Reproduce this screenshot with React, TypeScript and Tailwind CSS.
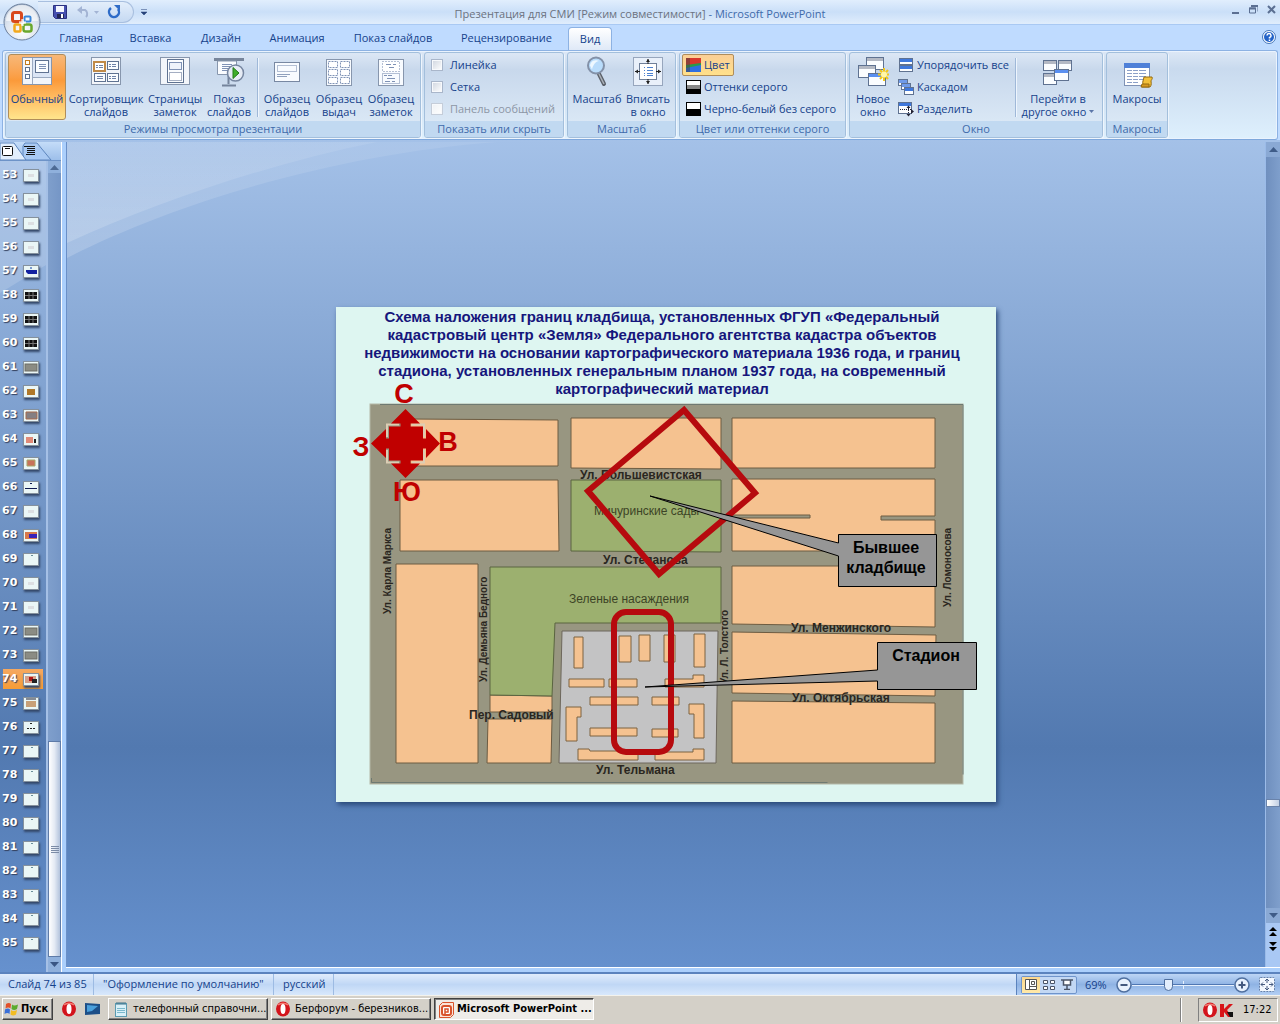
import React from "react";

/* ---------- generic icon frame ---------- */

type IconProps = { children: React.ReactNode; w?: number; h?: number };

function Svg({ children, w = 32, h = 32 }: IconProps) {
  return (
    <svg width={w} height={h} viewBox={`0 0 ${w} ${h}`} className="shrink-0" aria-hidden="true">
      {children}
    </svg>
  );
}

function Page({ x, y, w, h, bar, dash }: { x: number; y: number; w: number; h: number; bar?: string; dash?: boolean }) {
  return (
    <g>
      <rect x={x + 0.5} y={y + 0.5} width={w - 1} height={h - 1} fill="#fbfdff" stroke="#5f7291" strokeDasharray={dash ? "1 1" : undefined} />
      {bar && <rect x={x + 1} y={y + 1} width={w - 2} height={3} fill={bar} />}
    </g>
  );
}

function Lines({ x, y, w, n, gap = 2, color = "#7f92b5" }: { x: number; y: number; w: number; n: number; gap?: number; color?: string }) {
  return (
    <g stroke={color}>
      {Array.from({ length: n }, (_, i) => (
        <path key={i} d={`M${x} ${y + i * gap + 0.5}h${w}`} />
      ))}
    </g>
  );
}

function Sheet() {
  return <rect x="1.5" y="1.5" width="29" height="27" fill="#f2f5fa" stroke="#8796ad" />;
}

const NormalIcon = () => (
  <Svg>
    <Sheet />
    <rect x="11" y="2" width="19" height="19" fill="#dbe5f5" />
    <path d="M11.5 2v26M11 21.5h19" stroke="#9aa9c0" fill="none" />
    <Page x={14} y={4} w={14} h={13} />
    <Lines x={18} y={8} w={7} n={3} />
    <rect x="4.5" y="4.5" width="4" height="4" fill="#fff" stroke="#c07a1e" />
    <rect x="4.5" y="11.5" width="4" height="4" fill="#fff" stroke="#5f7291" />
    <rect x="4.5" y="18.5" width="4" height="4" fill="#fff" stroke="#5f7291" />
  </Svg>
);

const SorterIcon = () => (
  <Svg>
    <Sheet />
    <rect x="4" y="6" width="11" height="9" fill="#fff" stroke="#c08a48" strokeWidth="2" />
    <Page x={17} y={5} w={12} h={9} />
    <Page x={4} y={17} w={12} h={9} />
    <Page x={17} y={17} w={12} h={9} />
    <path d="M6 9.5h2m1 0h4M6 11.5h2m1 0h4M19 8.5h2m1 0h4M19 10.5h2m1 0h4M7 20.5h6M7 22.5h6M19 20.5h2m1 0h4M19 22.5h2m1 0h4" stroke="#6f83a8" />
  </Svg>
);

const NotesPageIcon = () => (
  <Svg>
    <Sheet />
    <Page x={8} y={3} w={17} h={24} />
    <rect x="10.500" y="6.500" width="12" height="7" fill="#eef3fb" stroke="#7f92b5" />
    <rect x="10.500" y="16.500" width="12" height="8" fill="#fff" stroke="#4a5f85" strokeDasharray="1 1" />
  </Svg>
);

const ShowIcon = () => (
  <Svg>
    <rect x="1" y="2" width="30" height="3" fill="#77859b" />
    <path d="M4.500 5v13.500h19V5z" fill="#fafcff" stroke="#8796ad" />
    <Lines x={9} y={8} w={10} n={4} />
    <path d="M15.500 19v9M9 29.500h14" stroke="#75849c" strokeWidth="2" />
    <circle cx="22.500" cy="17" r="8" fill="#e6ecf5" stroke="#7686a0" strokeWidth="1.500" />
    <path d="M20 11.500v11l6-5.500z" fill="#3fae2a" stroke="#237a18" />
  </Svg>
);

const MasterIcon = ({ kind }: { kind: "slide" | "handout" | "notes" }) => (
  <Svg>
    {kind === "slide" ? (
      <>
        <rect x="3.500" y="6.500" width="25" height="19" fill="#f8fbff" stroke="#7888a2" />
        <rect x="6.500" y="9.500" width="19" height="6" fill="none" stroke="#6f83a8" strokeDasharray="1 1" />
        <path d="M6 18.500h13M6 20.500h10" stroke="#8fa0bd" />
      </>
    ) : (
      <>
        <rect x="3.500" y="3.500" width="25" height="26" fill="#f8fbff" stroke="#8796ad" />
        {kind === "handout" ? (
          [5, 13, 21].map((y) => (
            <g key={y} fill="#fff" stroke="#7f92b5" strokeDasharray="2 1">
              <rect x="5.500" y={y + 0.5} width="9" height="6" />
              <rect x="17.500" y={y + 0.5} width="9" height="6" />
            </g>
          ))
        ) : (
          <>
            <rect x="7.500" y="5.500" width="17" height="10" fill="#fff" stroke="#6f83a8" strokeDasharray="1 2" />
            <path d="M11 8.500h5m2 0h3M14 11.500h5M9 19.500h3m1 0h4M12 22.500h8M10 25.500h5m2 0h3" stroke="#7f92b5" />
            <rect x="7.500" y="17.500" width="17" height="10" fill="none" stroke="#6f83a8" strokeDasharray="1 1" />
          </>
        )}
      </>
    )}
  </Svg>
);

const MagnifierIcon = () => (
  <Svg>
    <path d="M18 18l5 10" stroke="#5a5f68" strokeWidth="4" strokeLinecap="round" />
    <path d="M18 18l5 10" stroke="#aab0b8" strokeWidth="1.500" />
    <circle cx="15" cy="9.500" r="8" fill="#b9dcfb" stroke="#8391a8" strokeWidth="2" />
    <path d="M9 9.500a6 6 0 0 1 9-4.500C15 5.500 12 8.500 11 13.500z" fill="#eef8ff" />
  </Svg>
);

const FitIcon = () => (
  <Svg>
    <rect x="1.500" y="1.500" width="29" height="28" fill="#e9f0fa" stroke="#97a6bd" />
    <rect x="7.500" y="7.500" width="17" height="16" fill="#fff" stroke="#6f7f99" />
    <path d="M12 11.500h1m2 0h6M12 14.500h1m2 0h6M12 17.500h1m2 0h6M12 19.500h1m2 0h6" stroke="#4d82d0" />
    <path d="M16 3v5M16 23v5M3 15.500h5M24 15.500h5" stroke="#222" />
    <path d="M14 6l2-3 2 3zM14 25l2 3 2-3zM6 13.500l-3 2 3 2zM26 13.500l3 2-3 2z" fill="#222" />
  </Svg>
);

function Win({ x, y, w, h, active }: { x: number; y: number; w: number; h: number; active?: boolean }) {
  return <Page x={x} y={y} w={w} h={h} bar={active ? "#5a8ff0" : "#b4b9c4"} />;
}

const NewWindowIcon = () => (
  <Svg>
    <Win x={9} y={1} w={18} h={13} />
    <Win x={1} y={9} w={18} h={13} />
    <Win x={11} y={17} w={18} h={13} active />
    <path d="M27 12v13M21 18.500h11M23 14l8 9M31 14l-8 9" stroke="#f3c818" strokeWidth="2" />
    <circle cx="27" cy="18.500" r="3" fill="#fff6a8" />
  </Svg>
);

const SwitchIcon = () => (
  <Svg>
    <Win x={1} y={4} w={14} h={11} />
    <Win x={16} y={4} w={14} h={11} />
    <Win x={1} y={17} w={14} h={12} />
    <Win x={12} y={13} w={15} h={12} active />
  </Svg>
);

const MacroIcon = () => (
  <Svg>
    <rect x="3.500" y="7.500" width="25" height="22" fill="#fff" stroke="#7f92b5" />
    <rect x="3" y="7" width="26" height="5" fill="#4f80d8" />
    <path d="M6 14.500h5m1 0h5m1 0h7M6 17.500h5m1 0h5m1 0h7M6 20.500h5m1 0h5m1 0h7M6 23.500h5m1 0h5m1 0h7M6 26.500h5m1 0h5" stroke="#8ba0c8" />
    <path d="M23 21h8c1 2-1 3-1 4s1 4-1 6h-8c2-3 0-4 1-6z" fill="#f2c03a" stroke="#946a10" />
    <path d="M21 28h7v3h-8z" fill="#d89a20" stroke="#946a10" />
  </Svg>
);

const ArrangeIcon = () => (
  <Svg w={16} h={16}>
    <Page x={1} y={1} w={14} h={7} bar="#3f78dc" />
    <Page x={1} y={8} w={14} h={7} bar="#3f78dc" />
  </Svg>
);
const CascadeIcon = () => (
  <Svg w={16} h={16}>
    <Page x={0} y={0} w={10} h={7} bar="#6f9bea" />
    <Page x={3} y={4} w={10} h={7} bar="#6f9bea" />
    <Page x={6} y={8} w={10} h={8} bar="#3f78dc" />
  </Svg>
);
const SplitIcon = () => (
  <Svg w={16} h={16}>
    <Page x={0} y={1} w={14} h={12} bar="#3f78dc" />
    <path d="M2 8.500h12M10.500 5v10" stroke="#223" strokeDasharray="1 1" />
    <path d="M8.500 7l2-2.500 2 2.500zM8.500 13l2 2.500 2-2.500zM13 8l3 2.500-3 2.500z" fill="#223" />
  </Svg>
);

const ColorIcon = () => (
  <Svg w={15} h={14}>
    <rect width="15" height="14" fill="#2a9a4a" />
    <path d="M0 0h15v5L0 7z" fill="#d8382c" />
    <path d="M0 10l15-3v7H0z" fill="#2f6fe0" />
    <path d="M0 0h4v14H0z" fill="#444" opacity="0.500" />
  </Svg>
);
const GrayIcon = () => (
  <Svg w={15} h={14}>
    <rect width="15" height="14" fill="#000" />
    <rect x="1" y="1" width="13" height="4" fill="#fff" />
    <rect x="1" y="5" width="13" height="4" fill="#888" />
  </Svg>
);
const BwIcon = () => (
  <Svg w={15} h={14}>
    <rect width="15" height="14" fill="#000" />
    <rect x="1" y="1" width="13" height="6" fill="#fff" />
  </Svg>
);

const OperaIcon = () => (
  <Svg w={16} h={16}>
    <ellipse cx="8" cy="8" rx="7" ry="7.500" fill="#d3141c" />
    <path d="M3 4a7 6 0 0 1 10 0" stroke="#f47a70" fill="none" strokeWidth="1.500" />
    <ellipse cx="8" cy="8" rx="2.500" ry="5" fill="#fff" />
  </Svg>
);

/* ---------- title bar ---------- */

function OfficeButton() {
  return (
    <button aria-label="Office" className="absolute left-[3px] top-[3px] z-20 h-[38px] w-[38px]">
      <svg width="38" height="38" viewBox="0 0 38 38">
        <defs>
          <radialGradient id="orb" cx="50%" cy="75%" r="75%">
            <stop offset="0" stopColor="#ffffff" />
            <stop offset="0.600" stopColor="#dbe3ee" />
            <stop offset="1" stopColor="#b2bfd2" />
          </radialGradient>
        </defs>
        <circle cx="19" cy="19" r="18" fill="url(#orb)" stroke="#6b7f9c" />
        <path d="M3 18a16 16 0 0 1 32 0z" fill="#fff" opacity="0.600" />
        <g fill="none">
          <rect x="9.500" y="9.500" width="9" height="9" rx="2" stroke="#d8481c" strokeWidth="3" />
          <rect x="21.500" y="13.500" width="6" height="5" rx="1" stroke="#3a86d8" strokeWidth="2" />
          <rect x="11.500" y="21.500" width="6" height="7" rx="1" stroke="#f2a81c" strokeWidth="2.500" />
          <rect x="20.500" y="21.500" width="8" height="7" rx="2" stroke="#6aa82c" strokeWidth="2.500" />
        </g>
        <path d="M16 19h3v-3M20 16v3h3M16 20h3v3M20 23v-3h3" stroke="#fff" fill="none" />
      </svg>
    </button>
  );
}

function TitleBar() {
  return (
    <header className="relative flex h-6 items-center bg-linear-to-b from-[#e1eefd] via-[#cadff8] to-[#e0edfc]">
      <OfficeButton />
      <div className="ml-[38px] flex h-[22px] w-24 items-center gap-2 rounded-r-full border border-l-0 border-[#a8bfdf] bg-linear-to-b from-[#e3eefb] to-[#c5d9f2] pl-[14px]">
        <button aria-label="Сохранить">
          <Svg w={16} h={16}>
            <path d="M1.500 1.500h13v13h-11l-2-2z" fill="#4650b0" stroke="#2b3180" />
            <rect x="4" y="2" width="8" height="6" fill="#f4f6ff" />
            <rect x="5" y="10" width="7" height="4" fill="#222653" />
            <rect x="9" y="10" width="2" height="4" fill="#fff" />
          </Svg>
        </button>
        <button aria-label="Отменить" className="flex items-center gap-1">
          <Svg w={14} h={16}>
            <path d="M3 6h6a3 4 0 0 1 1 7" stroke="#a3b4d4" strokeWidth="2" fill="none" />
            <path d="M1 6l5-4v8z" fill="#a3b4d4" />
          </Svg>
          <Svg w={5} h={3}>
            <path d="M0 0h5l-2.500 3z" fill="#a3b4d4" />
          </Svg>
        </button>
        <button aria-label="Повторить">
          <Svg w={14} h={16}>
            <path d="M4 4a5 5 0 1 0 7 1" stroke="#2f6cc8" strokeWidth="2.500" fill="none" />
            <path d="M7 1h6v6z" fill="#2f6cc8" />
          </Svg>
        </button>
      </div>
      <button aria-label="Настройка панели" className="ml-[7px]">
        <Svg w={6} h={8}>
          <path d="M0 1.500h6M0 4h6l-3 3z" fill="#26427a" stroke="#26427a" strokeWidth="0.500" />
        </Svg>
      </button>
      <h1 className="absolute inset-x-0 top-[5px] text-center text-[11px] leading-[18px] text-[#3e6aaa]">
        <span className="text-[#6b7280]">Презентация для СМИ [Режим совместимости]</span>
        {"  - Microsoft PowerPoint"}
      </h1>
      <div className="z-10 mb-[6px] ml-auto flex items-center gap-[9px] pr-1">
        <button aria-label="Свернуть">
          <Svg w={9} h={9}>
            <path d="M1 8h7" stroke="#5b6f92" strokeWidth="2" />
          </Svg>
        </button>
        <button aria-label="Восстановить">
          <Svg w={9} h={9}>
            <path d="M2 1.500h7v5M0.500 3v5h6V3z" stroke="#5b6f92" fill="none" />
            <path d="M2 1h7M0 3.500h7" stroke="#5b6f92" strokeWidth="2" />
          </Svg>
        </button>
        <button aria-label="Закрыть">
          <Svg w={9} h={9}>
            <path d="M1 1l7 7M8 1L1 8" stroke="#5b6f92" strokeWidth="2" />
          </Svg>
        </button>
      </div>
    </header>
  );
}

function TabBar() {
  const tabs: [string, string][] = [
    ["Главная", "w-[70px]"],
    ["Вставка", "w-[69px]"],
    ["Дизайн", "w-[72px]"],
    ["Анимация", "w-[80px]"],
    ["Показ слайдов", "w-[112px]"],
    ["Рецензирование", "w-[115px]"],
  ];
  return (
    <nav className="flex h-[26px] items-end border-t border-[#a9c9f3] bg-[#bfdbff] pl-[46px] text-[11px] text-[#15428b]">
      {tabs.map(([t, w]) => (
        <button key={t} className={`${w} h-[23px] whitespace-nowrap`}>
          {t}
        </button>
      ))}
      <button className="ml-1 h-[23px] w-11 rounded-t border border-b-0 border-[#8db2e3] bg-linear-to-b from-white to-[#dfe9f7]">Вид</button>
      <button aria-label="Справка" className="mb-[6px] ml-auto mr-1">
        <Svg w={14} h={14}>
          <circle cx="7" cy="7" r="6.500" fill="#fff" stroke="#4576b8" />
          <circle cx="7" cy="7" r="5" fill="#2463c8" />
          <path d="M5 5.500a2 2 0 1 1 2.500 2v1M7.500 9.500v1.500" stroke="#fff" strokeWidth="1.500" fill="none" />
        </Svg>
      </button>
    </nav>
  );
}

/* ---------- ribbon ---------- */

function Group({ label, className, children }: { label: string; className: string; children: React.ReactNode }) {
  return (
    <section
      className={`flex h-[86px] flex-col rounded-[3px] border border-[#a3bfdc] bg-linear-to-b from-[#dce7f5] from-0% via-[#c8d8ec] via-20% to-[#dfecf8] shadow-[1px_1px_0_#eef5fd] ${className}`}
    >
      <div className="flex flex-1 px-[2px] pt-px">{children}</div>
      <h2 className="h-4 overflow-hidden whitespace-nowrap rounded-b-[2px] bg-[#c1d9f1] text-center text-[11px] leading-4 text-[#3e6aaa]">{label}</h2>
    </section>
  );
}

function BigButton({ icon, lines, className, active, menu }: { icon: React.ReactNode; lines: string[]; className: string; active?: boolean; menu?: boolean }) {
  return (
    <button
      className={`flex h-[66px] flex-col items-center whitespace-nowrap rounded-[3px] border pt-px leading-[13px] ${
        active ? "border-[#b08d5a] bg-linear-to-b from-[#f7b878] from-0% via-[#fb9a3a] via-40% to-[#ffe58c]" : "border-transparent"
      } ${className}`}
    >
      {icon}
      <span className="mt-1 block">{lines[0]}</span>
      {lines[1] && (
        <span className="flex items-center gap-[3px]">
          {lines[1]}
          {menu && (
            <Svg w={5} h={3}>
              <path d="M0 0h5l-2.500 3z" fill="#5b76a8" />
            </Svg>
          )}
        </span>
      )}
    </button>
  );
}

const Separator = ({ className }: { className: string }) => <div className={`my-1 w-px bg-[#9fb8d8] shadow-[1px_0_0_#eef5fd] ${className}`} />;

function SmallButton({ icon, label, active }: { icon: React.ReactNode; label: string; active?: boolean }) {
  return (
    <button
      className={`flex h-[22px] items-center gap-[3px] self-start whitespace-nowrap rounded-[2px] border px-[3px] ${
        active ? "border-[#b08d5a] bg-linear-to-b from-[#fbcf96] to-[#ffe08a]" : "border-transparent"
      }`}
    >
      {icon}
      {label}
    </button>
  );
}

function CheckRow({ label, disabled }: { label: string; disabled?: boolean }) {
  return (
    <label className={`flex h-[22px] items-center gap-[7px] whitespace-nowrap pl-1 ${disabled ? "text-[#8d96a5]" : ""}`}>
      <input
        type="checkbox"
        disabled={disabled}
        className="h-3 w-3 appearance-none border border-[#a9b6ca] bg-linear-to-br from-[#cfd5df] to-white shadow-[inset_0_0_0_1px_#f7f9fc] disabled:border-[#c5cdd9] disabled:from-[#eef1f5]"
      />
      {label}
    </label>
  );
}

function Ribbon() {
  return (
    <div className="mx-[2px] flex h-[90px] gap-[3px] rounded-[3px] border border-[#8db2e3] border-b-[#7fa8dc] bg-linear-to-b from-[#dde8f6] from-0% via-[#c9daee] via-20% to-[#def0fd] pl-[2px] pt-px text-[11px] text-[#15428b] shadow-[inset_0_0_0_1px_#eaf3fe]">
      <Group label="Режимы просмотра презентации" className="w-[416px]">
        <BigButton className="w-[58px]" icon={<NormalIcon />} lines={["Обычный"]} active />
        <BigButton className="w-[80px]" icon={<SorterIcon />} lines={["Сортировщик", "слайдов"]} />
        <BigButton className="w-[58px]" icon={<NotesPageIcon />} lines={["Страницы", "заметок"]} />
        <BigButton className="w-[50px]" icon={<ShowIcon />} lines={["Показ", "слайдов"]} />
        <Separator className="mx-[3px]" />
        <BigButton className="w-[52px]" icon={<MasterIcon kind="slide" />} lines={["Образец", "слайдов"]} />
        <BigButton className="w-[52px]" icon={<MasterIcon kind="handout" />} lines={["Образец", "выдач"]} />
        <BigButton className="w-[52px]" icon={<MasterIcon kind="notes" />} lines={["Образец", "заметок"]} />
      </Group>
      <Group label="Показать или скрыть" className="w-[140px]">
        <div className="flex flex-col">
          <CheckRow label="Линейка" />
          <CheckRow label="Сетка" />
          <CheckRow label="Панель сообщений" disabled />
        </div>
      </Group>
      <Group label="Масштаб" className="w-[109px]">
        <BigButton className="w-[54px]" icon={<MagnifierIcon />} lines={["Масштаб"]} />
        <BigButton className="w-[48px]" icon={<FitIcon />} lines={["Вписать", "в окно"]} />
      </Group>
      <Group label="Цвет или оттенки серого" className="w-[167px]">
        <div className="flex flex-col">
          <SmallButton icon={<ColorIcon />} label="Цвет" active />
          <SmallButton icon={<GrayIcon />} label="Оттенки серого" />
          <SmallButton icon={<BwIcon />} label="Черно-белый без серого" />
        </div>
      </Group>
      <Group label="Окно" className="w-[254px]">
        <BigButton className="w-[42px]" icon={<NewWindowIcon />} lines={["Новое", "окно"]} />
        <div className="flex w-[119px] flex-col">
          <SmallButton icon={<ArrangeIcon />} label="Упорядочить все" />
          <SmallButton icon={<CascadeIcon />} label="Каскадом" />
          <SmallButton icon={<SplitIcon />} label="Разделить" />
        </div>
        <Separator className="mx-[2px]" />
        <BigButton className="w-[80px]" icon={<SwitchIcon />} lines={["Перейти в", "другое окно"]} menu />
      </Group>
      <Group label="Макросы" className="w-[62px]">
        <BigButton className="w-[56px]" icon={<MacroIcon />} lines={["Макросы"]} />
      </Group>
    </div>
  );
}

/* ---------- thumbnails ---------- */

function thumbArt(n: number): React.ReactNode {
  if (n >= 77 || n === 69) return <rect x="7" y="1" width="2" height="1" fill="#6a8f9a" />;
  if (n === 76) return <path d="M3 6.500h2m1 0h2m1 0h2M6 1.500h2" stroke="#222" />;
  if (n === 57)
    return (
      <g fill="#1222a0">
        <rect x="6" y="1" width="2" height="2" fill="#7a9ad0" />
        <path d="M2 4h11v4H4L2 6z" />
      </g>
    );
  if (n === 66) return <path d="M6 1.500h2M1 6.500h12" stroke="#0d1a50" />;
  if (n >= 58 && n <= 60)
    return (
      <g>
        <rect x="1" y="2" width="12" height="7" fill="#111" />
        <path d="M5 2v7M9 2v7M1 5.500h12" stroke="#777" />
      </g>
    );
  if (n === 61 || n === 72 || n === 73) return <rect x="1" y="2" width="12" height="7" fill="#8b8c84" stroke="#6c6d64" />;
  if (n === 62) return <rect x="3" y="3" width="8" height="6" fill="#b07828" />;
  if (n === 63) return <path d="M2 2h11v7H2z" fill="#857f82" stroke="#a86a4a" />;
  if (n === 64)
    return (
      <g>
        <path d="M2 3h7v6H2z" fill="#e08a78" />
        <path d="M10 5h2v4h-2z" fill="#222" />
      </g>
    );
  if (n === 65) return <path d="M3 2h8v6H3z" fill="#c8725a" stroke="#a8a868" />;
  if (n === 68)
    return (
      <g>
        <path d="M1 2h12v7H1z" fill="#d8784a" />
        <path d="M5 4h8v4H5z" fill="#3a22b8" />
      </g>
    );
  if (n === 74)
    return (
      <g>
        <path d="M1 2h11v7H1z" fill="#d8a088" />
        <path d="M5 3h4v4H5z" fill="#b01818" />
        <path d="M8 5h5v4H8z" fill="#222" />
      </g>
    );
  if (n === 75)
    return (
      <g>
        <path d="M2 1h10" stroke="#223" />
        <path d="M2 3h10v6H2z" fill="#c8a078" />
      </g>
    );
  return <path d="M4 4h6v3H4z" fill="#dcdfe2" />;
}

function ThumbPanel() {
  const numbers = Array.from({ length: 33 }, (_, i) => 53 + i);
  return (
    <aside className="relative flex w-[62px] shrink-0 flex-col border-r border-white">
      <svg className="absolute left-0 top-[19px]" width="46" height="132" viewBox="0 0 46 132" aria-hidden="true">
        <path d="M0 0h46v104L0 132z" fill="#fff" opacity="0.150" />
      </svg>
      <div className="flex h-[19px] border-b border-[#6d93c8] bg-linear-to-b from-[#c4dcf8] to-[#9dbfea]">
        <svg width="61" height="18" viewBox="0 0 61 18" role="img" aria-label="Слайды и структура">
          <path d="M23 18V4l2-3h12l14 17z" fill="#a9c9f3" stroke="#5d85bd" />
          <path d="M0 18V1h14l12 17z" fill="#e2eefc" stroke="#5d85bd" />
          <rect x="2.500" y="4.500" width="10" height="9" rx="1" fill="#fff" stroke="#111" />
          <path d="M5 6.500h5M24 4.500h11M27 6.500h8M27 8.500h8M27 10.500h8M26 12.500h9" stroke="#111" />
        </svg>
      </div>
      <div className="relative flex flex-1">
        <ol className="w-[46px] pt-[2px] font-['DejaVu_Sans'] text-[11px] font-bold text-white">
          {numbers.map((n) => (
            <li key={n} className="flex h-6 items-center">
              <button className={`ml-[3px] flex h-5 w-10 items-center justify-between pr-1 [text-shadow:1px_1px_1px_#333f5c] ${n === 74 ? "bg-linear-to-b from-[#f5a860] to-[#f59c34]" : ""}`}>
                <span className="-ml-px">{n}</span>
                <svg width="16" height="13" viewBox="-1 -1 16 13" className="bg-[#eaf6f6] shadow-[1px_2px_2px_#34486a]">
                  {thumbArt(n)}
                  <rect x="-0.500" y="-0.500" width="15" height="12" fill="none" stroke="#5a6678" strokeOpacity="0.700" />
                </svg>
              </button>
            </li>
          ))}
        </ol>
        <div className="flex flex-1 flex-col items-center border-l-2 border-[#a5c0e6] bg-linear-to-r from-[#7f9fcc] to-[#7596c6]">
          <button aria-label="Вверх" className="flex h-3 w-full items-center justify-center bg-[#8fb0dc]">
            <Svg w={9} h={5}>
              <path d="M0 5h9L4.500 0z" fill="#4d6a94" />
            </Svg>
          </button>
          <div className="flex-1" />
          <div className="flex h-[216px] w-[13px] flex-col items-center justify-center gap-px border border-[#5e7ba8] bg-linear-to-r from-white via-[#e4eaf4] to-[#b3c3dc]">
            {[0, 1, 2, 3].map((i) => (
              <div key={i} className="h-px w-2 bg-[#7b8ba6]" />
            ))}
          </div>
          <button aria-label="Вниз" className="flex h-[15px] w-full items-center justify-center bg-[#8fb0dc]">
            <Svg w={9} h={5}>
              <path d="M0 0h9L4.500 5z" fill="#3a5684" />
            </Svg>
          </button>
        </div>
      </div>
    </aside>
  );
}

/* ---------- slide ---------- */

const blocks = [
  "410,419 558,420 558,466 410,466",
  "571,418 721,418 721,469 571,468",
  "732,418 935,418 935,468 732,468",
  "400,480 558,480 559,551 400,551",
  "732,479 935,479 935,516 881,516 881,520 935,520 935,551 732,551 732,518 810,518 810,515 732,515",
  "396,564 478,564 478,763 396,763",
  "490,695 552,696 552,712 490,712",
  "488,719 552,719 551,763 487,763",
  "732,566 935,566 935,627 732,624",
  "732,632 936,635 935,696 732,693",
  "732,701 935,703 935,763 732,763",
];

const buildings = [
  "574,637 583,637 583,668 574,668",
  "619,636 631,636 631,662 619,662",
  "639,635 650,635 650,661 639,661",
  "664,635 675,635 675,662 664,662",
  "694,634 705,634 705,667 694,667",
  "569,679 604,679 604,687 569,687",
  "609,679 637,679 637,687 609,687",
  "590,697 638,697 638,705 590,705",
  "652,697 679,697 679,705 652,705",
  "590,728 637,728 637,736 590,736",
  "652,729 678,729 678,737 652,737",
  "665,679 693,679 693,675 704,675 704,687 665,687",
  "566,707 581,707 581,717 577,717 577,741 566,741",
  "689,704 704,704 704,738 694,738 694,714 689,714",
  "578,749 589,749 590,751 638,751 638,760 578,760",
  "655,752 693,752 693,749 704,749 704,760 655,760",
];

function MapDrawing() {
  return (
    <svg viewBox="336 307 660 495" className="absolute inset-0 h-full w-full" fontFamily="'Liberation Sans', Arial, sans-serif" role="img" aria-label="Схема границ">
      <rect x="370" y="404" width="593" height="380" fill="#989681" stroke="#b4b8a8" />
      <path d="M380 404.500h583v370M371.500 778v4.500h456" fill="none" stroke="#6f7a72" />
      <g fill="#f5c290" stroke="#6d5c42">
        {blocks.map((p) => (
          <polygon key={p} points={p} />
        ))}
      </g>
      <g fill="#9cb06f" stroke="#5a6440">
        <polygon points="571,480 721,480 721,552 571,551" />
        <polygon points="490,567 721,567 721,623 555,623 552,696 490,695" />
      </g>
      <polygon points="562,631 718,631 716,763 559,763" fill="#c3c3c4" stroke="#6d675c" />
      <g fill="#f5c290" stroke="#7d6240">
        {buildings.map((p) => (
          <polygon key={p} points={p} />
        ))}
      </g>
      <g fontSize="12" fontWeight="700" fill="#2a2620">
        <text x="580" y="479">Ул. Большевистская</text>
        <text x="603" y="564">Ул. Степанова</text>
        <text x="791" y="632">Ул. Менжинского</text>
        <text x="792" y="702">Ул. Октябрьская</text>
        <text x="596" y="774">Ул. Тельмана</text>
        <text x="469" y="719">Пер. Садовый</text>
      </g>
      <g fontSize="12" fill="#3c4426">
        <text x="594" y="515">Мичуринские сады</text>
        <text x="569" y="603">Зеленые насаждения</text>
      </g>
      <g fontSize="10" fontWeight="700" fill="#2a2620">
        <text transform="translate(391 614) rotate(-90)">Ул. Карла Маркса</text>
        <text transform="translate(487 682) rotate(-90)">Ул. Демьяна Бедного</text>
        <text transform="translate(728 684) rotate(-90)">Ул. Л. Толстого</text>
        <text transform="translate(951 607) rotate(-90)">Ул. Ломоносова</text>
      </g>
      <g fill="none" stroke="#b60a0e" strokeWidth="6">
        <polygon points="684,410 588,491 659,574 755,493" />
        <rect x="614" y="612" width="57" height="140" rx="12" />
      </g>
      <g fill="none" stroke="#dccdb4" strokeWidth="2">
        <path d="M387 437v-12.500h12M412 424.500h12V437M387 450v12.500h12M412 462.500h12V450" />
      </g>
      <path
        d="M405.500 409l14.500 14.500h-9.500v3H423v12h3v-9.500l14 14.500-14 14.500v-9.500h-3v12h-12.500v3h9.500L405.500 478 391 463.500h9.500v-3H389v-12h-3v9.500l-15-14.500 15-14.500v9.500h3v-12h11.500v-3H391z"
        fill="#c00000"
      />
      <g fontSize="27" fontWeight="700" fill="#c00000" textAnchor="middle">
        <text x="404" y="403">С</text>
        <text x="361" y="456">З</text>
        <text x="448" y="451">В</text>
        <text x="407" y="501">Ю</text>
      </g>
      <g fill="#969696" stroke="#000">
        <path d="M838.500 534.500h98v52h-98V556L650 496l188.500 47z" />
        <path d="M877.500 642.500h99v47h-99V681L645 687l232.500-17z" />
      </g>
      <g fontSize="16" fontWeight="700" fill="#000" textAnchor="middle">
        <text x="886" y="553">Бывшее</text>
        <text x="886" y="573">кладбище</text>
        <text x="926" y="661">Стадион</text>
      </g>
    </svg>
  );
}

function Slide() {
  return (
    <article className="relative aspect-[4/3] w-[660px] bg-[#def6f1] pr-2 shadow-[2px_3px_5px_#2b4a7a]">
      <h2 className="pt-px text-center font-['Liberation_Sans'] text-[15px] font-bold leading-[18px] text-[#16167c]">
        <span className="block">Схема наложения границ кладбища, установленных ФГУП «Федеральный</span>
        <span className="block">кадастровый центр «Земля» Федерального агентства кадастра объектов</span>
        <span className="block">недвижимости на основании картографического материала 1936 года, и границ</span>
        <span className="block">стадиона, установленных генеральным планом 1937 года, на современный</span>
        <span className="block">картографический материал</span>
      </h2>
      <MapDrawing />
    </article>
  );
}

function Workspace() {
  return (
    <main className="flex min-w-0 flex-1 flex-col border-l-4 border-[#abcffc]">
      <div className="flex flex-1">
        <div className="relative flex flex-1 items-center justify-center overflow-hidden border-l border-[#6b90c8]">
          <svg className="absolute left-0 top-0" width="460" height="120" viewBox="0 0 460 120" aria-hidden="true">
            <defs>
              <linearGradient id="sheen" x1="0" y1="0" x2="0" y2="1">
                <stop offset="0" stopColor="#fff" stopOpacity="0.080" />
                <stop offset="1" stopColor="#fff" stopOpacity="0.180" />
              </linearGradient>
            </defs>
            <path d="M0 0h430C270 12 110 60 0 116z" fill="url(#sheen)" />
            <path d="M0 0h310C200 22 90 60 0 101z" fill="url(#sheen)" />
          </svg>
          <Slide />
        </div>
        <div className="flex w-[15px] flex-col border-l border-[#9bbbe8] bg-linear-to-r from-[#6f8fbe] to-[#7f9fcc]">
          <button aria-label="Прокрутить вверх" className="flex h-[15px] items-center justify-center bg-[#8aa9d4]">
            <Svg w={9} h={5}>
              <path d="M0 5h9L4.500 0z" fill="#3f5c88" />
            </Svg>
          </button>
          <div className="flex-1" />
          <div className="h-2 border border-[#6a83aa] bg-linear-to-r from-white to-[#c3d0e4]" />
          <div className="h-[101px]" />
          <button aria-label="Прокрутить вниз" className="flex h-[15px] items-center justify-center bg-[#8aa9d4]">
            <Svg w={9} h={5}>
              <path d="M0 0h9L4.500 5z" fill="#3f5c88" />
            </Svg>
          </button>
          <div className="flex h-11 flex-col items-center gap-[6px] bg-[#a9c8f4] pt-1">
            <button aria-label="Предыдущий слайд">
              <Svg w={8} h={9}>
                <path d="M0 4h8L4 0zM0 9h8L4 5z" fill="#000" />
              </Svg>
            </button>
            <button aria-label="Следующий слайд">
              <Svg w={8} h={9}>
                <path d="M0 0h8L4 4zM0 5h8L4 9z" fill="#000" />
              </Svg>
            </button>
          </div>
        </div>
      </div>
      <div className="h-[5px] border-t border-white bg-[#abcffc]" />
    </main>
  );
}

/* ---------- status bar ---------- */

function StatusBar() {
  return (
    <footer className="flex h-[23px] items-stretch border-t-2 border-[#5b83be] bg-linear-to-b from-[#e0ecfc] via-[#c0d7f5] to-[#d8e8fc] text-[11px] leading-5 text-[#15428b]">
      <span className="w-[94px] whitespace-nowrap border-r border-[#9dbbe3] pl-2">Слайд 74 из 85</span>
      <span className="w-[180px] whitespace-nowrap border-r border-[#9dbbe3] pl-[9px]">"Оформление по умолчанию"</span>
      <span className="w-[60px] border-r border-[#9dbbe3] pl-[9px]">русский</span>
      <div className="ml-auto flex w-[264px] items-center border-l border-[#5b83be] bg-linear-to-b from-[#bdd5f5] via-[#8fb3e4] to-[#b3cff4] pl-1">
        <div className="flex h-[18px] rounded-[2px] border border-[#6f94cb] bg-[#c3d8f4]">
          <button aria-label="Обычный режим" className="flex w-[18px] items-center justify-center bg-linear-to-b from-[#fbd78e] to-[#ffe9a8]">
            <Svg w={12} h={11}>
              <path d="M0.500 0.500h11v10H0.500zM4.500 0v11M6.500 2.500h3v3h-3zM4.500 7.500h7" fill="#fff" stroke="#555" />
            </Svg>
          </button>
          <button aria-label="Сортировщик" className="flex w-[18px] items-center justify-center">
            <Svg w={12} h={10}>
              <path d="M0.500 0.500h4v3h-4zM7.500 0.500h4v3h-4zM0.500 6.500h4v3h-4zM7.500 6.500h4v3h-4z" fill="#fff" stroke="#4b5568" />
            </Svg>
          </button>
          <button aria-label="Показ слайдов" className="flex w-[18px] items-center justify-center">
            <Svg w={12} h={11}>
              <path d="M0 1h12M2.500 1v5h7V1M6 6v4M3 10.500h6" fill="#fff" stroke="#4b5568" strokeWidth="1.500" />
            </Svg>
          </button>
        </div>
        <button className="ml-2 w-[30px] text-left">69%</button>
        <button aria-label="Уменьшить" className="ml-px">
          <Svg w={16} h={16}>
            <circle cx="8" cy="8" r="7" fill="#e8f1fd" stroke="#4f6f9f" strokeWidth="1.500" />
            <path d="M4.500 8h7" stroke="#44597e" strokeWidth="2" />
          </Svg>
        </button>
        <input
          type="range"
          min={0}
          max={100}
          defaultValue={34}
          aria-label="Масштаб"
          className="h-4 w-[102px] appearance-none bg-[linear-gradient(#4f77b3,#4f77b3),linear-gradient(#e6f0fd,#e6f0fd),linear-gradient(#e6f0fd,#e6f0fd)] bg-[length:100%_1px,100%_1px,1px_8px] bg-[position:0_7px,0_8px,51px_4px] bg-no-repeat [&::-webkit-slider-thumb]:h-3 [&::-webkit-slider-thumb]:w-[9px] [&::-webkit-slider-thumb]:appearance-none [&::-webkit-slider-thumb]:rounded-b-full [&::-webkit-slider-thumb]:border [&::-webkit-slider-thumb]:border-[#4f6f9f] [&::-webkit-slider-thumb]:bg-[#e3eefc]"
        />
        <button aria-label="Увеличить">
          <Svg w={16} h={16}>
            <circle cx="8" cy="8" r="7" fill="#e8f1fd" stroke="#4f6f9f" strokeWidth="1.500" />
            <path d="M4.500 8h7M8 4.500v7" stroke="#44597e" strokeWidth="2" />
          </Svg>
        </button>
        <button aria-label="Вписать слайд" className="ml-[9px]">
          <Svg w={16} h={15}>
            <rect x="0.500" y="0.500" width="15" height="14" rx="1" fill="#f2f7fe" stroke="#6580ab" strokeDasharray="2 1" />
            <path d="M8 2v4M8 9v4M2 7.500h4M10 7.500h4M6 4l2-2 2 2M6 11l2 2 2-2M4 5.500l-2 2 2 2M12 5.500l2 2-2 2" stroke="#44597e" fill="none" />
          </Svg>
        </button>
      </div>
    </footer>
  );
}

/* ---------- taskbar ---------- */

const raised = "border border-t-white border-l-white border-r-[#404040] border-b-[#404040] shadow-[inset_-1px_-1px_0_#808080]";

function Taskbar() {
  return (
    <div className="flex h-[29px] items-start border-t border-[#f4f2ec] bg-[#d4d0c8] pt-[2px] font-['DejaVu_Sans_Condensed','DejaVu_Sans',sans-serif] text-[11px] text-black">
      <button className={`ml-[2px] flex h-[22px] w-[51px] items-center gap-px pl-px font-bold ${raised}`}>
        <Svg w={16} h={16}>
          <path d="M2 3q3-2 5 0L6.500 7.500q-2-2-5 0z" fill="#e2502a" />
          <path d="M8 3.500q2 2 6 0L13 8q-3 2-5.500 0z" fill="#5bab2c" />
          <path d="M1 8.500q3-2 5 0L5.500 13q-2-2-5 0z" fill="#3a6fd8" />
          <path d="M7 9q2 2 6 0l-1 4.500q-3 2-5.500 0z" fill="#f2bc22" />
        </Svg>
        Пуск
      </button>
      <div className="ml-2 flex h-[22px] items-center gap-2">
        <button aria-label="Opera">
          <OperaIcon />
        </button>
        <button aria-label="Рабочий стол">
          <Svg w={15} h={14}>
            <path d="M0 1l15 1v10l-15 1z" fill="#1d4f88" />
            <path d="M2 3l11 1-6 5-5 1z" fill="#4aa0dc" />
          </Svg>
        </button>
      </div>
      <div className="ml-2 flex min-w-0 gap-[3px] whitespace-nowrap">
        <button className={`flex h-[22px] w-[160px] items-center gap-1 pl-[5px] ${raised}`}>
          <Svg w={15} h={16}>
            <rect x="1.500" y="2.500" width="11" height="13" fill="#d8f0f8" stroke="#5a9ab0" />
            <path d="M3 1v3M5 1v3M7 1v3M9 1v3M11 1v3" stroke="#3f7088" />
            <path d="M3 7.500h8M3 9.500h8M3 11.500h8" stroke="#7ab8cc" />
          </Svg>
          телефонный справочни...
        </button>
        <button className={`flex h-[22px] w-[160px] items-center gap-1 pl-[3px] ${raised}`}>
          <OperaIcon />
          Берфорум - березников...
        </button>
        <button className="flex h-[22px] w-[160px] items-center gap-[3px] border border-b-white border-l-[#404040] border-r-white border-t-[#404040] bg-[#eeece8] pl-[3px] pt-px font-bold shadow-[inset_1px_1px_0_#808080]">
          <Svg w={16} h={16}>
            <path d="M1.500 3.500l3-3h11v12l-3 3h-11z" fill="#fbe4d8" stroke="#d8532c" />
            <rect x="4" y="4" width="9" height="9" rx="2" fill="#fff" stroke="#d8532c" strokeWidth="2" />
            <path d="M7 12V7h3v3H7" stroke="#d8532c" strokeWidth="1.500" fill="none" />
          </Svg>
          Microsoft PowerPoint ...
        </button>
      </div>
      <div className="ml-auto mr-4 h-6 w-[2px] border-l border-[#808080] bg-white" />
      <div className="mr-[2px] flex h-6 w-20 items-center gap-px border border-b-white border-l-[#808080] border-r-white border-t-[#808080] pl-[3px]">
        <OperaIcon />
        <Svg w={15} h={15}>
          <path d="M1 1h4v5l5-5h4L8 7l5 7H9L5 9v5H1z" fill="#d81418" />
          <path d="M8 9l6 0v5h-3z" fill="#111" />
        </Svg>
        <time className="ml-2">17:22</time>
      </div>
    </div>
  );
}

export default function App() {
  return (
    <div className="flex min-h-screen flex-col overflow-hidden bg-[#bfdbff] font-['Open_Sans','Noto_Sans',sans-serif]">
      <TitleBar />
      <TabBar />
      <Ribbon />
      <div className="flex flex-1 bg-linear-to-b from-[#a4c1e8] from-0% via-[#5279b0] via-73% to-[#6691ce] pt-[2px]">
        <ThumbPanel />
        <Workspace />
      </div>
      <StatusBar />
      <Taskbar />
    </div>
  );
}
